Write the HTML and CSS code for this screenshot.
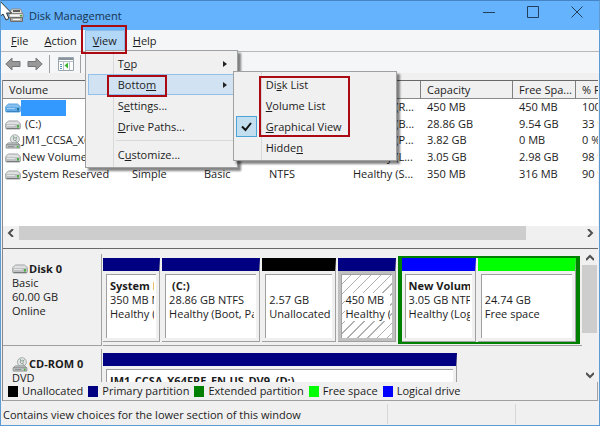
FILE: index.html
```html
<!DOCTYPE html>
<html lang="en">
<head>
<meta charset="utf-8">
<title>Disk Management</title>
<link rel="stylesheet" href="styles.css">
</head>
<body>
<svg class="defs" width="0" height="0" aria-hidden="true">
  <symbol id="drive" viewBox="0 0 16 10">
    <path d="M3.500 1h9l2.800 2.500v4.500a1 1 0 0 1-1 1H1.700a1 1 0 0 1-1-1V3.500z" fill="#dfe1e1" stroke="#a0a4a4"/>
    <path d="M1 4h14v3.800a1 1 0 0 1-1 1H2a1 1 0 0 1-1-1z" fill="#bfc2c2"/>
    <path d="M1.500 8.500h13" stroke="#767a7a"/>
    <path d="M2 5.500h8" stroke="#e4e6e6"/>
    <path d="M12 5h2v2.500h-2z" fill="#4fae45"/>
  </symbol>
  <symbol id="drive-blue" viewBox="0 0 16 10">
    <path d="M3.500 1h9l2.800 2.500v4.500a1 1 0 0 1-1 1H1.700a1 1 0 0 1-1-1V3.500z" fill="#86bfee" stroke="#5aa2de"/>
    <path d="M1 4h14v3.800a1 1 0 0 1-1 1H2a1 1 0 0 1-1-1z" fill="#62abe6"/>
    <path d="M1.500 8.500h13" stroke="#3a82c2"/>
    <path d="M2 5.500h8" stroke="#a5d3f6"/>
    <path d="M12 5h2v2.500h-2z" fill="#1f78a0"/>
  </symbol>
  <symbol id="cdrom" viewBox="0 0 16 16">
    <circle cx="10" cy="5.500" r="4.800" fill="#dfe3e3" stroke="#a5aaaa"/>
    <path d="M8 2l1.500 3M12.500 3l-2 2M12 9l-1.500-2.500" stroke="#6fa77b"/>
    <circle cx="10" cy="5.500" r="1.500" fill="#fff" stroke="#8a8f8f"/>
    <path d="M3 9.500h10l2.300 2v3.500H.7v-3.500z" fill="#c9cccc" stroke="#8c9090"/>
    <path d="M1 11.500h14M2.500 13.500h7" stroke="#808484"/>
    <path d="M12 12.500h2v2h-2z" fill="#4fae45"/>
  </symbol>
</svg>
<div class="window">
  <header class="titlebar">
    <svg class="app-icon" width="17" height="17" viewBox="0 0 17 17" aria-hidden="true">
      <path d="M4.500 2h9l2 4.500h-13z" fill="#e6e4dc" stroke="#8a8a88"/>
      <path d="M6 4h7" stroke="#5c5c5c" stroke-width="2"/>
      <path d="M2 6.500h14v4H2z" fill="#dededa" stroke="#858585"/>
      <path d="M3.500 10.500h12v4h-12z" fill="#a9a9a6" stroke="#6c6c6c"/>
      <path d="M3 8.500h9M6 12.500h7" stroke="#fafafa"/>
      <path d="M13 8h2v1.500h-2z" fill="#45a23c"/>
    </svg>
    <h1>Disk Management</h1>
    <div class="controls">
      <button aria-label="Minimize"><svg width="14" height="14"><path d="M1 7.500h12"/></svg></button>
      <button aria-label="Maximize"><svg width="14" height="14"><path d="M1.500 1.500h11v11h-11z"/></svg></button>
      <button aria-label="Close"><svg width="14" height="14"><path d="M1.500 1.500l11 11M12.500 1.500l-11 11"/></svg></button>
    </div>
    <svg class="pointer" width="13" height="20" viewBox="0 0 13 20" aria-hidden="true"><path d="M-6-6L11.500 12H6.500l2.500 5.500-3 1.500-3-6L-2 17z" fill="#fff" stroke="#333"/></svg>
  </header>

  <nav class="menubar">
    <button><u>F</u>ile</button>
    <button><u>A</u>ction</button>
    <div class="menu-anchor">
      <button class="open marked"><u>V</u>iew</button>
      <div class="menu view-menu">
        <button>T<u>o</u>p<i class="arrow"></i></button>
        <div class="menu-anchor">
          <button class="hover"><span class="marked">Botto<u>m</u></span><i class="arrow"></i></button>
          <div class="menu sub-menu">
            <div class="marked">
              <button>Di<u>s</u>k List</button>
              <button><u>V</u>olume List</button>
              <button><svg class="check" width="21" height="21" viewBox="0 0 21 21" aria-hidden="true"><path d="M6 10.500l3.500 3.500 5.500-7"/></svg><u>G</u>raphical View</button>
            </div>
            <button>Hidde<u>n</u></button>
          </div>
        </div>
        <button>S<u>e</u>ttings...</button>
        <button><u>D</u>rive Paths...</button>
        <hr>
        <button>C<u>u</u>stomize...</button>
      </div>
    </div>
    <button><u>H</u>elp</button>
  </nav>

  <div class="toolbar">
    <button aria-label="Back"><svg width="16" height="14" viewBox="0 0 16 14"><path d="M.8 7L7 1v3.500h8v5H7V13z" fill="#989898" stroke="#747474"/></svg></button>
    <button aria-label="Forward"><svg width="16" height="14" viewBox="0 0 16 14"><path d="M15.200 7L9 1v3.500H1v5h8V13z" fill="#989898" stroke="#747474"/></svg></button>
    <span class="divider"></span>
    <button aria-label="Show console tree"><svg width="16" height="14" viewBox="0 0 16 14"><path d="M.5.5h15v13H.5z" fill="#fff" stroke="#9aa4ac"/><path d="M1 2h14" stroke="#8a949c" stroke-width="2"/><path d="M5.500 4v9M1 4.500h14M11.500 5v8" stroke="#b7c0c6"/><path d="M2 7.500h2M2 9.500h2M2 11.500h2" stroke="#5d8fb8"/><path d="M10 5.500v6L6.500 8.500z" fill="#35b52b"/></svg></button>
    <span class="divider"></span>
  </div>

  <main>
    <section class="volumes">
      <table>
        <colgroup><col class="c-volume"><col class="c-layout"><col class="c-type"><col class="c-fs"><col class="c-status"><col class="c-capacity"><col class="c-free"><col class="c-pct"></colgroup>
        <thead><tr><th>Volume</th><th>Layout</th><th>Type</th><th>File System</th><th>Status</th><th>Capacity</th><th>Free Spa...</th><th>% Free</th></tr></thead>
        <tbody>
          <tr><td><svg class="ico"><use href="#drive-blue"/></svg><span class="selected"></span></td><td>Simple</td><td>Basic</td><td></td><td>Healthy (R...</td><td>450 MB</td><td>450 MB</td><td>100 %</td></tr>
          <tr><td><svg class="ico"><use href="#drive"/></svg><span class="letter">(C:)</span></td><td>Simple</td><td>Basic</td><td>NTFS</td><td>Healthy (B...</td><td>28.86 GB</td><td>9.54 GB</td><td>33 %</td></tr>
          <tr><td><svg class="ico tall"><use href="#cdrom"/></svg>JM1_CCSA_X64FRE</td><td>Simple</td><td>Basic</td><td>UDF</td><td>Healthy (P...</td><td>3.82 GB</td><td>0 MB</td><td>0 %</td></tr>
          <tr><td><svg class="ico"><use href="#drive"/></svg>New Volume</td><td>Simple</td><td>Basic</td><td>NTFS</td><td>Healthy (L...</td><td>3.05 GB</td><td>2.98 GB</td><td>98 %</td></tr>
          <tr><td><svg class="ico"><use href="#drive"/></svg>System Reserved</td><td>Simple</td><td>Basic</td><td>NTFS</td><td>Healthy (S...</td><td>350 MB</td><td>316 MB</td><td>90 %</td></tr>
        </tbody>
      </table>
      <div class="scroll-x">
        <button aria-label="Scroll left"><svg width="8" height="8"><path d="M6 0L2 4l4 4"/></svg></button>
        <div class="track"><div class="thumb"></div></div>
        <button aria-label="Scroll right"><svg width="8" height="8"><path d="M2 0l4 4-4 4"/></svg></button>
      </div>
    </section>

    <section class="graph">
      <div class="disks">
        <div class="disk">
          <div class="disk-label">
            <h2><svg class="ico"><use href="#drive"/></svg>Disk 0</h2>
            <p>Basic</p><p>60.00 GB</p><p>Online</p>
          </div>
          <div class="parts disk0">
            <div class="part"><div class="body"><b>System Reserved</b><p>350 MB NTFS</p><p>Healthy (System)</p></div></div>
            <div class="part"><div class="body"><b class="letter">(C:)</b><p>28.86 GB NTFS</p><p>Healthy (Boot, Page File)</p></div></div>
            <div class="part unallocated"><div class="body"><b></b><p>2.57 GB</p><p>Unallocated</p></div></div>
            <div class="part hatched"><div class="body"><b></b><p>450 MB</p><p>Healthy (Recovery)</p></div></div>
            <div class="extended">
              <div class="part logical"><div class="body"><b>New Volume</b><p>3.05 GB NTFS</p><p>Healthy (Logical Drive)</p></div></div>
              <div class="part free"><div class="body"><b></b><p>24.74 GB</p><p>Free space</p></div></div>
            </div>
          </div>
        </div>
        <div class="disk">
          <div class="disk-label">
            <h2><svg class="ico tall"><use href="#cdrom"/></svg>CD-ROM 0</h2>
            <p>DVD</p><p>3.82 GB</p><p>Online</p>
          </div>
          <div class="parts cd0">
            <div class="part"><div class="body"><b>JM1_CCSA_X64FRE_EN-US_DV9  (D:)</b><p>3.82 GB UDF</p><p>Healthy (Primary Partition)</p></div></div>
          </div>
        </div>
      </div>
      <div class="scroll-y">
        <button aria-label="Scroll up"><svg width="8" height="8"><path d="M0 6l4-4 4 4"/></svg></button>
        <div class="track"><div class="thumb"></div></div>
        <button aria-label="Scroll down"><svg width="8" height="8"><path d="M0 2l4 4 4-4"/></svg></button>
      </div>
    </section>

    <ul class="legend">
      <li><i class="black"></i>Unallocated</li>
      <li><i class="navy"></i>Primary partition</li>
      <li><i class="green"></i>Extended partition</li>
      <li><i class="lime"></i>Free space</li>
      <li><i class="blue"></i>Logical drive</li>
    </ul>
  </main>

  <footer class="status"><span>Contains view choices for the lower section of this window</span><span></span><span></span></footer>
</div>
</body>
</html>
```

FILE: styles.css
```css
* { box-sizing: border-box; }
body {
  margin: 0;
  background: #f0f0f0;
  color: #1c1c1c;
  font: 11px/14px "Open Sans", "Noto Sans", sans-serif;
}
button {
  margin: 0;
  padding: 0;
  border: 0;
  background: none;
  color: inherit;
  font: inherit;
  white-space: nowrap;
}
h1, h2, p, ul { margin: 0; padding: 0; font-size: inherit; }
svg { display: block; flex: none; fill: none; }
.defs { position: absolute; }
u { text-decoration: underline; text-underline-offset: 1px; }

.window {
  display: flex;
  flex-direction: column;
  min-height: 100vh;
  border: 1px solid #5c9bd3;
  border-top-color: #4585c6;
  overflow: hidden;
}

/* Title bar */
.titlebar {
  position: relative;
  display: flex;
  align-items: center;
  height: 29px;
  padding-left: 6px;
  background: #65b3fc;
  color: #17324d;
}
.titlebar h1 { flex: 1; margin-left: 5px; font-weight: 400; }
.controls { display: flex; align-self: flex-start; }
.controls button { display: grid; place-items: center; width: 44px; height: 22px; }
.controls svg { stroke: #233f5c; }
.pointer { position: absolute; left: -1px; top: 0; }

/* Menus */
.menubar {
  display: flex;
  height: 22px;
  padding-left: 2px;
  background: #f5f6f7;
  border-bottom: 1px solid #b8b8b8;
}
.menubar > button, .menubar .open { height: 21px; padding: 0 8px; }
.menu-anchor { position: relative; }
.open { background: #b3d7f7; box-shadow: inset 0 0 0 1px #8cbce8; }
.marked { position: relative; }
.marked::after {
  content: "";
  position: absolute;
  z-index: 5;
  inset: -5px -2px -3px -4px;
  border: 2px solid #ac0a12;
  pointer-events: none;
}
.menu {
  position: absolute;
  z-index: 2;
  display: flex;
  flex-direction: column;
  padding: 2px;
  border: 1px solid #a0a0a0;
  box-shadow: 3px 3px 2px #0000007a;
  background: linear-gradient(#d9d9d9, #d9d9d9) 27px 0 / 1px 100% no-repeat #f0f0f0;
}
.view-menu { left: 0; top: 20px; width: 153px; }
.sub-menu { left: 145px; top: -3px; width: 164px; }
.menu button {
  position: relative;
  display: flex;
  align-items: center;
  width: 100%;
  height: 21px;
  padding-left: 30px;
}
.menu .hover { background: #d1e3f3; box-shadow: inset 0 0 0 1px #91c1ea; }
.hover .marked::after { inset: -3px -11px -5px; }
.sub-menu .marked::after { inset: 2px 44px 0 23px; }
.menu hr {
  align-self: stretch;
  margin: 3px 0 3px 28px;
  border: 0;
  border-top: 1px solid #d9d9d9;
}
.arrow {
  position: absolute;
  right: 8px;
  border: solid transparent;
  border-width: 3px 0 3px 4px;
  border-left-color: #222;
}
.check {
  position: absolute;
  left: 0;
  background: #c3dfef;
  box-shadow: inset 0 0 0 1px #4ca3d8;
  stroke: #111;
  stroke-width: 2;
}

/* Toolbar */
.toolbar {
  display: flex;
  align-items: center;
  gap: 6px;
  height: 28px;
  padding: 0 4px 4px;
  background: linear-gradient(#f5f6f7 21px, #f0f0f0 21px);
}
.divider { width: 1px; height: 18px; background: #a0a0a0; }
.toolbar .divider + button { margin-left: 2px; }

/* Panes */
main {
  flex: 1;
  display: flex;
  flex-direction: column;
  margin: 0 1px;
  border-left: 1px solid #8a8a8a;
}
.volumes {
  flex: 1;
  display: flex;
  flex-direction: column;
  border-top: 1px solid #696969;
  border-bottom: 1px solid #696969;
  padding-bottom: 8px;
  background: linear-gradient(#f0f0f0, #f0f0f0) bottom / 100% 8px no-repeat #fff;
}
table {
  width: 100%;
  height: 101px;
  border-collapse: separate;
  border-spacing: 0;
  table-layout: fixed;
}
th, td { padding: 0 0 0 6px; text-align: left; font-weight: 400; white-space: nowrap; overflow: hidden; }
th {
  height: 18px;
  background: #f0f0f0;
  border-right: 1px solid #808080;
  border-bottom: 1px solid #8a8a8a;
}
th:last-child { border-right: 0; }
td { height: 16px; }
td:first-child { padding-left: 2px; }
td svg, td span { display: inline-block; vertical-align: middle; }
td .ico, td .selected { margin-top: -3px; margin-bottom: -3px; }
.ico { width: 16px; height: 10px; margin-right: 1px; }
.ico.tall { height: 15px; }
.selected { width: 45px; height: 16px; margin-left: -1px; background: #3399ff; }
.letter { padding-left: 3px; }
td .letter { display: inline; vertical-align: baseline; }
.c-volume { width: 123px; }
.c-layout { width: 72px; }
.c-type { width: 65px; }
.c-fs { width: 84px; }
.c-status { width: 74px; }
.c-capacity { width: 92px; }
.c-free { width: 63px; }

/* Scroll bars */
.scroll-x, .scroll-y { display: flex; background: #f0f0f0; stroke: #505050; stroke-width: 2; }
.scroll-x { height: 14px; margin-top: auto; }
.scroll-x button, .scroll-y button { display: grid; place-items: center; width: 16px; height: 14px; }
.track { flex: 1; }
.thumb { background: #cdcdcd; }
.scroll-x .thumb { width: 90%; height: 100%; }
.scroll-y { flex-direction: column; width: 15px; margin-right: 1px; }
.scroll-y .thumb { height: 68px; }

/* Disk graph */
.graph { display: flex; height: 133px; padding-top: 2px; overflow: hidden; }
.disks { flex: 1; min-width: 0; height: 131px; overflow: hidden; }
.disk { display: flex; height: 95px; padding-top: 3px; }
.disk-label {
  width: 99px;
  padding: 8px 0 0 9px;
  border-right: 1px solid #a0a0a0;
  border-bottom: 1px solid #a0a0a0;
}
.disk-label h2 { display: flex; align-items: center; height: 14px; font-weight: 700; }
.disk-label p { height: 14px; }
.parts {
  flex: 1;
  display: grid;
  gap: 2px;
  min-width: 0;
  margin-left: 1px;
  padding: 2px 2px 1px 0;
  border-bottom: 1px solid #a0a0a0;
}
.disk0 { grid-template-columns: 57fr 98fr 74fr 57fr 182fr; }
.cd0 { grid-template-columns: 355fr 121fr; }
.part {
  min-width: 0;
  margin: 2px 0;
  padding: 3px;
  border-top: 13px solid #000080;
  border-right: 1px solid #a0a0a0;
  border-bottom: 1px solid #a0a0a0;
  background: #f0f0f0;
}
.body {
  height: 100%;
  padding: 4px 2px 0 3px;
  border: solid #a0a0a0;
  border-width: 1px 0 0 1px;
  background: #fff;
  overflow: hidden;
  white-space: pre;
}
.body b { display: block; height: 14px; }
.body b, .body p { overflow: hidden; }
.unallocated { border-top-color: #000; }
.unallocated .body { padding-right: 0; }
.logical { border-top-color: #0000ff; }
.free { border-top-color: #00ff00; }
.hatched { background: #c0c0c0; }
.hatched .body { background: repeating-linear-gradient(135deg, #fff 0 6px, #b0b0b0 6px 7px); }
.hatched p { background: #fff; }
.extended {
  display: grid;
  grid-template-columns: 74fr 98fr;
  gap: 2px;
  min-width: 0;
  border: solid #008000;
  border-width: 2px 4px;
  background: #f0f0f0;
}
.extended .part { margin: 0; }

/* Legend and status bar */
.legend {
  display: flex;
  gap: 5px;
  height: 19px;
  padding-left: 5px;
  border-bottom: 1px solid #a0a0a0;
  border-right: 1px solid #a0a0a0;
  list-style: none;
}
.legend li { display: flex; align-items: center; gap: 4px; white-space: nowrap; }
.legend i { width: 10px; height: 11px; }
.black { background: #000; }
.navy { background: #000080; }
.green { background: #008000; }
.lime { background: #00ff00; }
.blue { background: #0000ff; }
.status { display: flex; height: 24px; padding: 3px 0 1px 2px; }
.status span { flex: 83; border-right: 1px solid #d7d7d7; line-height: 22px; white-space: nowrap; }
.status span:first-child { flex: 385; }
.status span:nth-child(2) { flex: 128; }
.status span:last-child { border: 0; }
```
